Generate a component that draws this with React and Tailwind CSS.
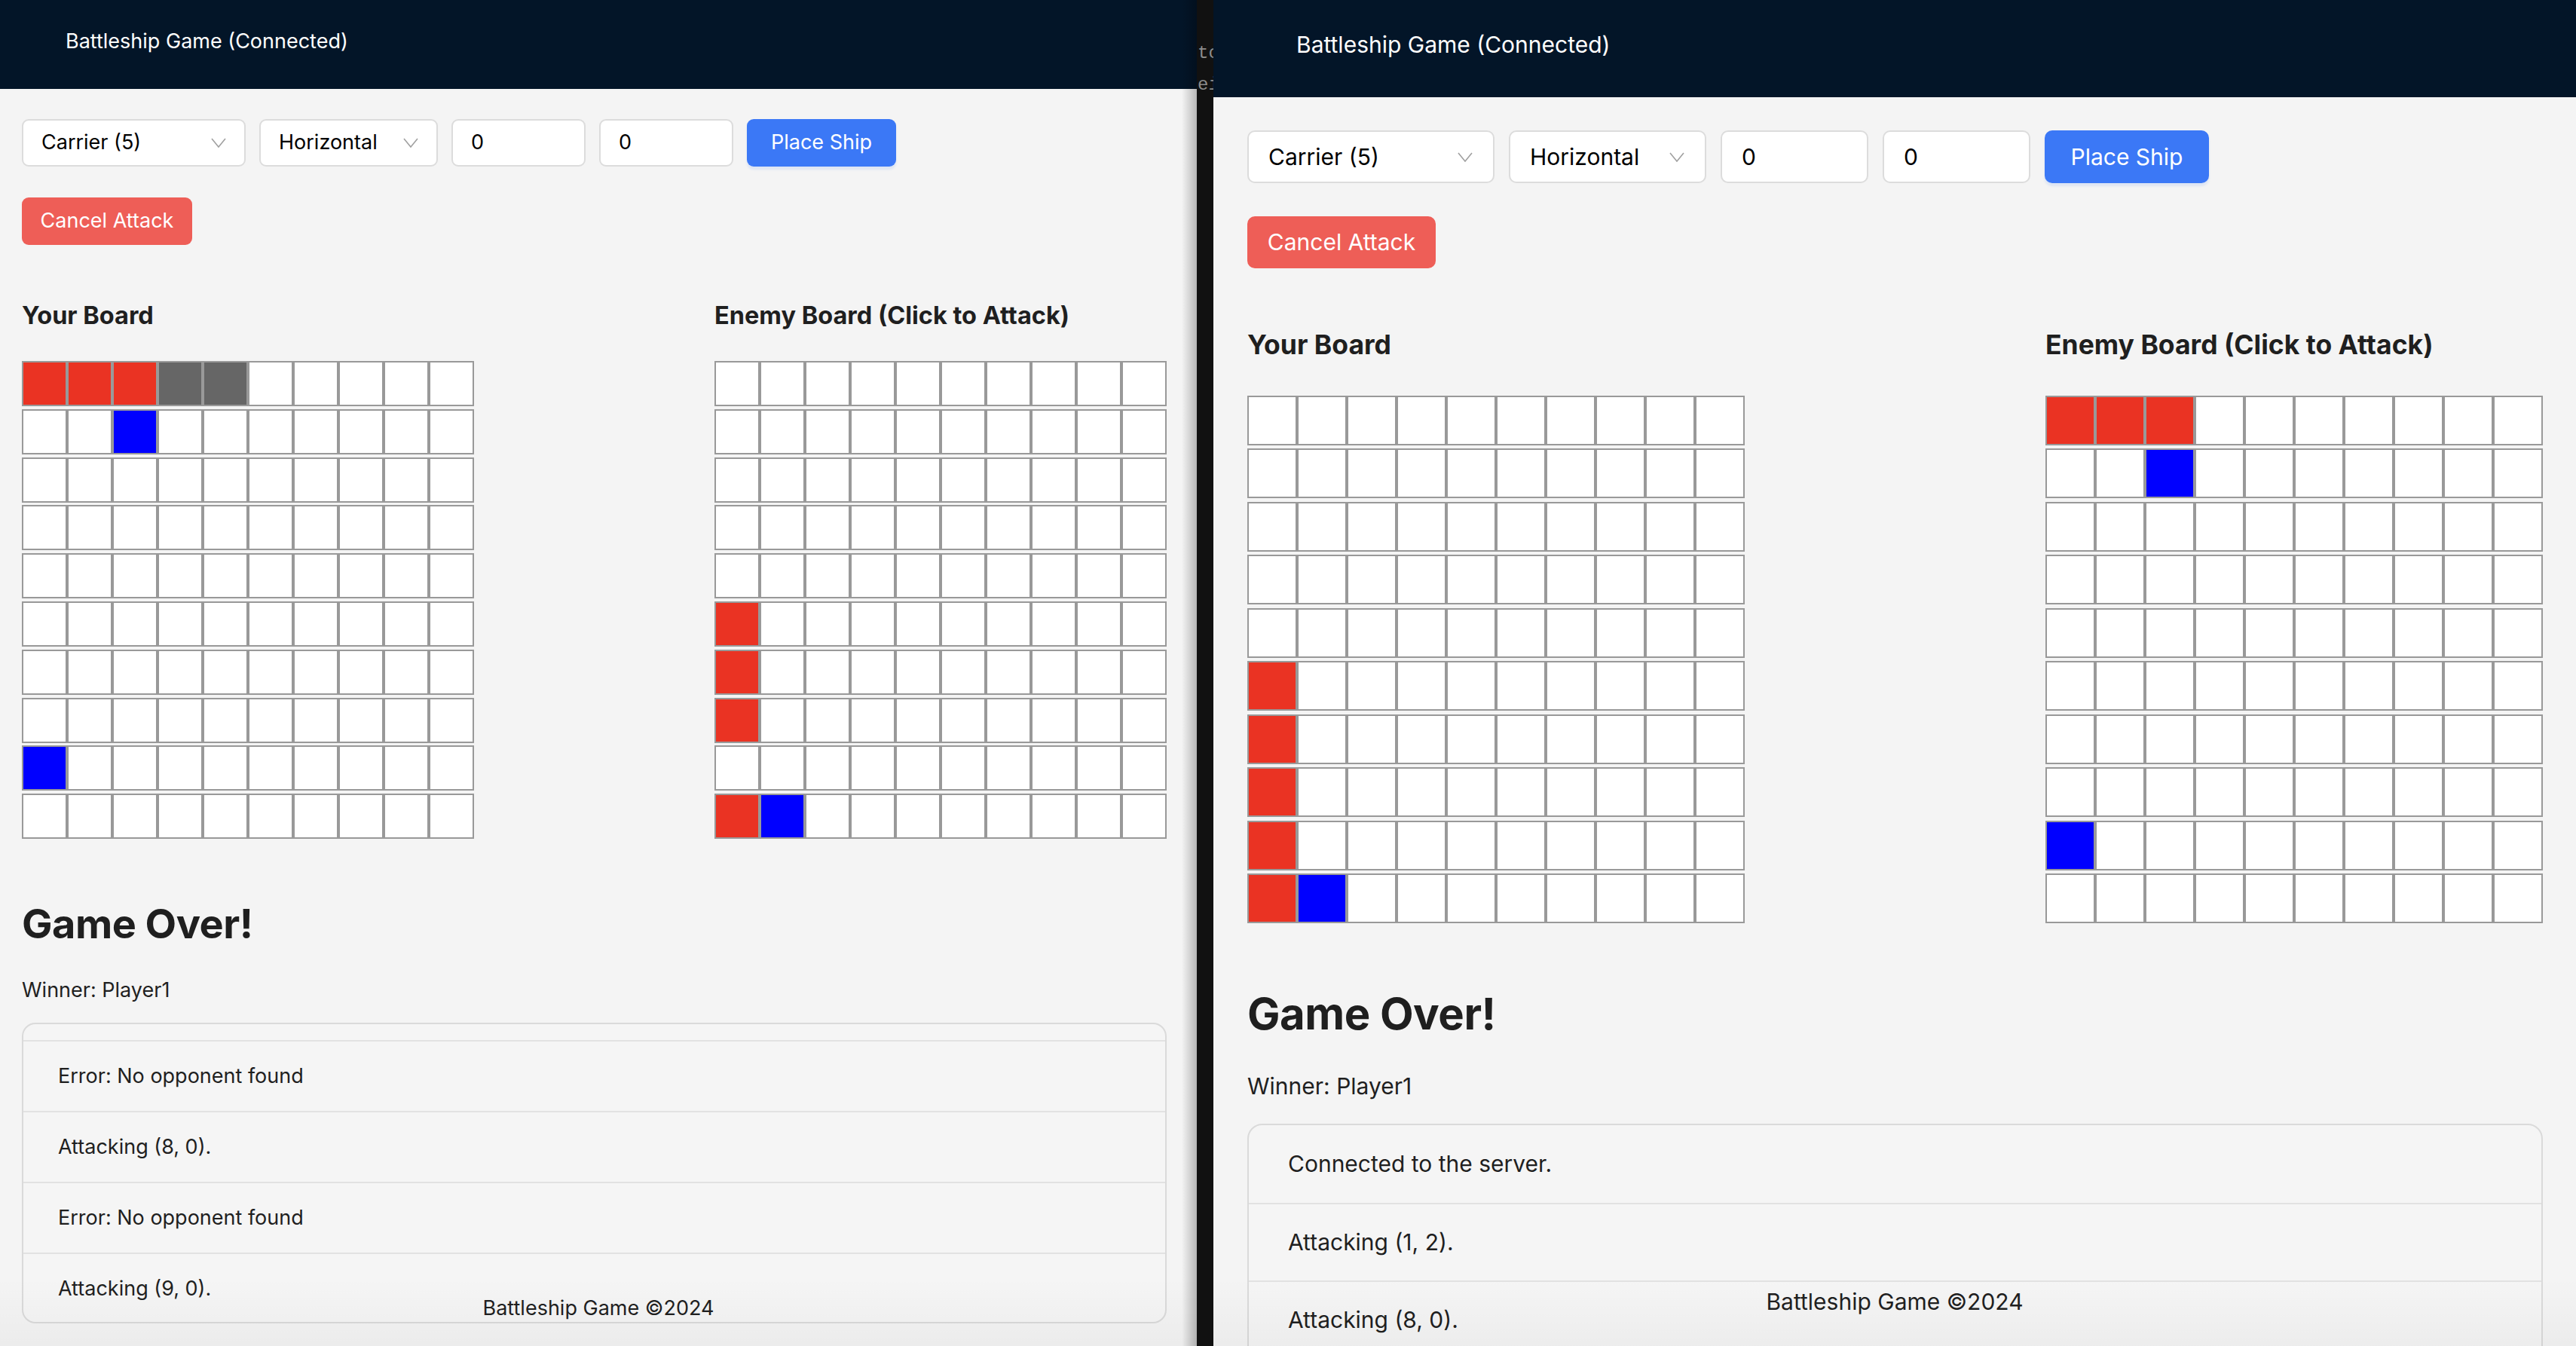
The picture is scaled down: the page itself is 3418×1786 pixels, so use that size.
import React from 'react';

const RED = 'bg-[#ea3323]';
const BLUE = 'bg-[#0000ff]';
const GRAY = 'bg-[#666666]';

// board maps: key "row-col" -> colour class
const boards = {
  leftMine: { '0-0': RED, '0-1': RED, '0-2': RED, '0-3': GRAY, '0-4': GRAY, '1-2': BLUE, '8-0': BLUE },
  leftEnemy: { '5-0': RED, '6-0': RED, '7-0': RED, '9-0': RED, '9-1': BLUE },
  rightMine: { '5-0': RED, '6-0': RED, '7-0': RED, '8-0': RED, '9-0': RED, '9-1': BLUE },
  rightEnemy: { '0-0': RED, '0-1': RED, '0-2': RED, '1-2': BLUE, '8-0': BLUE },
};

// sizes for the two browser windows (left one is zoomed out a bit)
const sizes = {
  left: {
    win: 'w-[1588px]',
    header: 'h-[118px] pl-[87px] pb-[8px] text-[27px]',
    content: 'pl-[29px] pr-[40px]',
    row: 'mt-[40px] gap-[18px]',
    control: 'h-[63px] text-[27px] rounded-[9px]',
    widths: ['w-[297px]', 'w-[237px]', 'w-[178px]', 'w-[178px]', 'w-[198px]'],
    pad: 'pl-[24px] pr-[24px]',
    cancel: 'mt-[41px] h-[63px] w-[226px] text-[27px] rounded-[9px]',
    heading: 'mt-[74px] mb-[41px] text-[32.5px]',
    rowGap: 'gap-[3.8px]',
    cell: 'w-[60px] h-[60px]',
    over: 'mt-[81px] text-[54px]',
    winner: 'mt-[39px] text-[27px]',
    log: 'mt-[27px] h-[399px] rounded-[18px]',
    first: 'h-[21px]',
    item: 'h-[94px] pl-[46px] text-[27px]',
    items: ['Error: No opponent found', 'Attacking (8, 0).', 'Error: No opponent found', 'Attacking (9, 0).'],
    footer: 'bottom-[30px] text-[27px]',
    mine: boards.leftMine,
    enemy: boards.leftEnemy,
  },
  right: {
    win: 'flex-1',
    header: 'h-[129px] pl-[110px] pb-[10px] text-[30px]',
    content: 'pl-[45px] pr-[44px]',
    row: 'mt-[44px] gap-[19px]',
    control: 'h-[70px] text-[30px] rounded-[10px]',
    widths: ['w-[328px]', 'w-[262px]', 'w-[196px]', 'w-[196px]', 'w-[218px]'],
    pad: 'pl-[26px] pr-[27px]',
    cancel: 'mt-[44px] h-[69px] w-[250px] text-[30px] rounded-[10px]',
    heading: 'mt-[81px] mb-[45px] text-[35.5px]',
    rowGap: 'gap-[4.5px]',
    cell: 'w-[66px] h-[66px]',
    over: 'mt-[86px] text-[58px]',
    winner: 'mt-[42px] text-[30px]',
    log: 'mt-[32px] h-[420px] rounded-[20px]',
    first: 'hidden',
    item: 'h-[103px] pl-[52px] text-[30px]',
    items: ['Connected to the server.', 'Attacking (1, 2).', 'Attacking (8, 0).', 'Attacking (9, 0).'],
    footer: 'bottom-[36px] text-[30px]',
    mine: boards.rightMine,
    enemy: boards.rightEnemy,
  },
};

const Chevron = () => (
  <svg width="20" height="13" viewBox="0 0 20 13" fill="none" className="shrink-0">
    <polyline points="1,1 10,12 19,1" stroke="#a0a0a0" strokeWidth="1.6" />
  </svg>
);

const Board = ({ s, map }) => (
  <div className={`flex flex-col ${s.rowGap}`}>
    {Array.from({ length: 10 }).map((_, r) => (
      <div key={r} className="flex">
        {Array.from({ length: 10 }).map((_, c) => (
          <div key={c} className={`${s.cell} border-2 border-[#999999] ${map[`${r}-${c}`] || 'bg-white'}`} />
        ))}
      </div>
    ))}
  </div>
);

const Window = ({ side }) => {
  const s = sizes[side];
  return (
    <div className={`relative h-full overflow-hidden bg-[#f4f4f4] ${s.win}`}>
      <div className={`flex items-center bg-[#031528] text-white ${s.header}`}>Battleship Game (Connected)</div>

      <div className={s.content}>
        <div className={`flex ${s.row}`}>
          <div className={`flex items-center justify-between bg-white border-2 border-[#dcdcdc] ${s.control} ${s.widths[0]} ${s.pad}`}>
            <span>Carrier (5)</span>
            <Chevron />
          </div>
          <div className={`flex items-center justify-between bg-white border-2 border-[#dcdcdc] ${s.control} ${s.widths[1]} ${s.pad}`}>
            <span>Horizontal</span>
            <Chevron />
          </div>
          <div className={`flex items-center bg-white border-2 border-[#dcdcdc] ${s.control} ${s.widths[2]} ${s.pad}`}>0</div>
          <div className={`flex items-center bg-white border-2 border-[#dcdcdc] ${s.control} ${s.widths[3]} ${s.pad}`}>0</div>
          <div className={`flex items-center justify-center bg-[#3b78f6] text-white shadow-[0_4px_3px_rgba(59,120,246,0.12)] ${s.control} ${s.widths[4]}`}>
            Place Ship
          </div>
        </div>

        <div className={`flex items-center justify-center bg-[#ee5e57] text-white ${s.cancel}`}>Cancel Attack</div>

        <div className="flex justify-between">
          <div>
            <h3 className={`font-bold leading-[1.2] text-[#1f1f1f] ${s.heading}`}>Your Board</h3>
            <Board s={s} map={s.mine} />
          </div>
          <div>
            <h3 className={`font-bold leading-[1.2] text-[#1f1f1f] ${s.heading}`}>Enemy Board (Click to Attack)</h3>
            <Board s={s} map={s.enemy} />
          </div>
        </div>

        <h1 className={`font-bold leading-[1.2] tracking-[-0.5px] text-[#1f1f1f] ${s.over}`}>Game Over!</h1>
        <p className={`leading-[1.2] text-[#1f1f1f] ${s.winner}`}>Winner: Player1</p>

        <div className={`overflow-hidden border-2 border-[#dadada] bg-[#f5f5f5] ${s.log}`}>
          <div className={s.first} />
          {s.items.map((t, i) => (
            <div
              key={i}
              className={`flex items-center text-[#1f1f1f] ${s.item} ${i > 0 || side === 'left' ? 'border-t-2 border-[#e2e2e2]' : ''}`}
            >
              {t}
            </div>
          ))}
        </div>
      </div>

      <div className="pointer-events-none absolute inset-x-0 bottom-0 h-[90px] bg-linear-to-b from-transparent to-black/[0.035]" />
      <div className={`absolute inset-x-0 text-center text-[#1f1f1f] ${s.footer}`}>Battleship Game ©2024</div>
      {side === 'left' && (
        <div className="pointer-events-none absolute inset-y-0 right-0 w-[20px] bg-linear-to-r from-transparent to-black/25" />
      )}
    </div>
  );
};

export default function App() {
  return (
    <div
      className="flex h-[1786px] w-[3418px] overflow-hidden bg-[#111111]"
      style={{ fontFamily: 'Inter, "Noto Sans", sans-serif' }}
    >
      <Window side="left" />
      <div className="relative w-[22px] shrink-0 overflow-hidden bg-[#111111]">
        <div className="absolute left-[1px] top-[56px] font-['Liberation_Mono',monospace] text-[24px] leading-[30px] text-[#8c8c8c] whitespace-nowrap">
          <div>tc</div>
          <div className="mt-[12px]">ei</div>
        </div>
      </div>
      <Window side="right" />
    </div>
  );
}
